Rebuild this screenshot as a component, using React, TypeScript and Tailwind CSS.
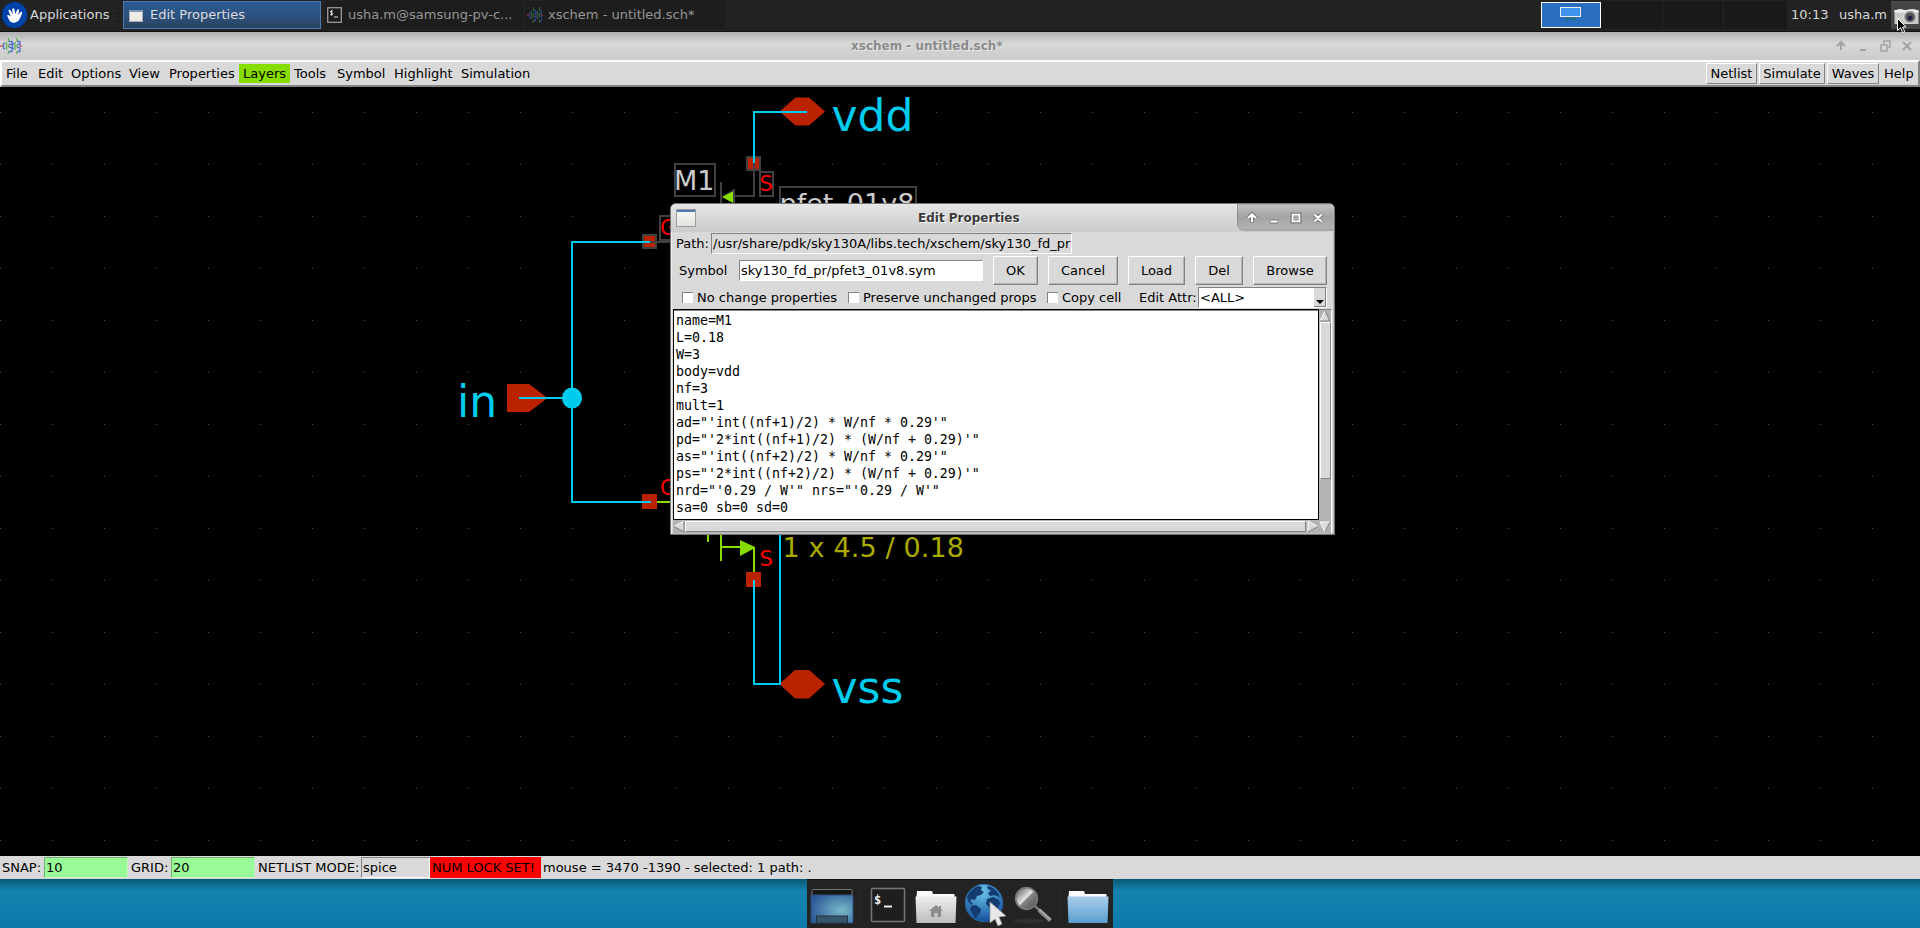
import React from "react";

const inset = "border border-t-[#828282] border-l-[#828282] border-r-white border-b-white";
const outset = "border border-t-white border-l-white border-r-[#828282] border-b-[#828282]";
const snapField = "flex h-[21px] w-[84px] items-center border border-[#6faf6f] border-r-[#c8f0c8] border-b-[#c8f0c8] bg-[#98fb98] pl-[1px]";

/* Single line of interface text; the class gives its colour and weight. */
function T({ children, cls = "text-black" }: { children: string; cls?: string }) {
  return <span className={"block h-5 shrink-0 text-[13px] leading-5 whitespace-nowrap " + cls}>{children}</span>;
}

const menus: [string, string][] = [
  ["File", "w-8"], ["Edit", "w-[33px]"], ["Options", "w-[58px]"], ["View", "w-10"], ["Properties", "w-[74px]"],
  ["Layers", "w-[51px] bg-[#88dd00]"], ["Tools", "w-[43px]"], ["Symbol", "w-[57px]"], ["Highlight", "w-[67px]"], ["Simulation", "w-[78px]"],
];

const props = [
  "name=M1", "L=0.18", "W=3", "body=vdd", "nf=3", "mult=1",
  "ad=\"'int((nf+1)/2) * W/nf * 0.29'\"",
  "pd=\"'2*int((nf+1)/2) * (W/nf + 0.29)'\"",
  "as=\"'int((nf+2)/2) * W/nf * 0.29'\"",
  "ps=\"'2*int((nf+2)/2) * (W/nf + 0.29)'\"",
  "nrd=\"'0.29 / W'\" nrs=\"'0.29 / W'\"",
  "sa=0 sb=0 sd=0",
];

function XschemIcon({ dim, width = 22 }: { dim?: boolean; width?: number }) {
  return (
    <svg width={width} height="16" viewBox="0 0 22 16" preserveAspectRatio="none" fill="none" strokeWidth="1.3" className="shrink-0" opacity={dim ? 0.6 : 0.85}>
      <path d="M0 8h3M19.500 8h2.500" stroke="#d84040" />
      <path d="M5 5.500h-1.500v5H5M12 3.500H8.500M12 3v3.500H9M12 9.500v4H8.500M12 9.500H9M14 5.500h-1.500v5H14M20 3.500h-3M20 3v3.500h-3M20 9.500v4h-3M20 9.500h-3" stroke="#3c60d0" />
      <path d="M8.500 0v3.500M8.500 16v-3M6.500 4v8M8.500 6.500v3M17 0v3.500M17 16v-3M15 4v8M17 6.500v3" stroke="#4aa83c" />
    </svg>
  );
}

function Taskbar() {
  return (
    <header className="flex h-8 shrink-0 items-center border-b border-[#111] bg-[#222] pb-px">
      <svg width="28" height="30" viewBox="0 0 28 30" className="ml-0.5 shrink-0">
        <ellipse cx="12.500" cy="15" rx="12.700" ry="13" fill="#0043a8" />
        <path d="M5 15.500c1.300-1.600 3 .3 3.800 1L6.500 11c-.3-1.800 1.700-1.700 2.300-.3l1.900 3.500-.5-4.700c.3-1.600 2-1.400 2.300 0l.8 4.500 1.800-4c.8-1.400 2.400-.5 2 1l-1 4.200 2.300-3c1.200-1 2.300.2 1.600 1.500-1.700 3.200-2 8.300-7.900 9-3.600.3-4.600-1.700-5.300-3.400z" fill="#fff" />
      </svg>
      <div className="flex w-[93px] shrink-0 items-center justify-between pr-[3px]">
        <T cls="text-[#d8d8d8]">Applications</T>
        <svg width="3" height="14"><path d="M0 1h3M0 5h3M0 9h3M0 13h3" stroke="#151515" /></svg>
      </div>
      <div className="flex h-7 w-[198px] shrink-0 items-center gap-[7px] border border-[#4a7ab0] bg-linear-to-b from-[#2b5a91] via-[#2d5280] to-[#2a4260] pl-[5px]">
        <svg width="14" height="14" className="mt-1"><rect x=".5" y=".5" width="13" height="11" fill="#ecebe5" stroke="#aaa" /><rect x="1" y="0" width="12" height="2" fill="#7898c0" /></svg>
        <T cls="text-[#dcdcdc]">Edit Properties</T>
      </div>
      <div className="ml-1 flex h-7 w-[200px] shrink-0 items-center gap-[6px] border-r border-[#262626] bg-[#1d1d1d] pl-[2px]">
        <svg width="15" height="16" viewBox="0 0 15 16"><rect x=".7" y=".7" width="13.600" height="14.600" fill="#1b1b1b" stroke="#9a9a9a" strokeWidth="1.300" /><path d="M5.800 4.200C5 3.500 3.400 3.800 3.400 4.800c0 1.300 2.400.7 2.400 2 0 1-1.600 1.300-2.500.6M4.600 3v5.800M7 10h4" stroke="#ddd" fill="none" /></svg>
        <T cls="text-[#969696]">usha.m@samsung-pv-c...</T>
      </div>
      <div className="flex h-7 w-[200px] shrink-0 items-center gap-[5px] bg-[#1d1d1d] pl-[2px]">
        <XschemIcon dim width={16} /><T cls="text-[#969696]">xschem - untitled.sch*</T>
      </div>
      <div className="ml-auto flex h-[30px] items-center">
        <div className="flex h-[26px] w-[60px] justify-center border border-white bg-[#2a6fbf] pt-[4px]">
          <svg width="22" height="18"><path d="M6 12l3-2 3 3 3-3M7 10v4M14 10v4" stroke="#27705f" fill="none" /><rect x=".5" y=".5" width="20" height="9" fill="#3f92ee" stroke="#eee" /></svg>
        </div>
        <div className="h-7 w-[62px] border-r border-[#262626] bg-[#191919]" />
        <div className="h-7 w-[61px] border-r border-[#262626] bg-[#191919]" />
        <div className="mr-[4px] h-7 w-[63px] bg-[#191919]" />
        <div className="w-12"><T cls="text-[#d8d8d8]">10:13</T></div>
        <div className="w-[52px]"><T cls="text-[#d8d8d8]">usha.m</T></div>
        <div className="flex h-7 w-[29px] items-center bg-[#454545]">
          <svg width="29" height="34" viewBox="0 0 29 34" className="relative z-10 shrink-0 overflow-visible">
            <path d="M4 12h2l1-1h4l2 1h3l2-1h6l2 2h1.500v13H3.500V12z" fill="#c9c9c5" /><path d="M3.500 12h24v2.500h-24z" fill="#eee" />
            <circle cx="19" cy="19" r="6.500" fill="#999" stroke="#e4e4e4" /><circle cx="19" cy="19" r="4.500" fill="#555" /><circle cx="19" cy="20" r="2.300" fill="#251a45" />
            <path d="M6.500 20.500v12l3-2.800 2.300 5 2-1-2.300-4.700h3.700z" fill="#000" stroke="#fff" strokeWidth="1" />
          </svg>
        </div>
      </div>
    </header>
  );
}

function Schematic() {
  const dots: React.ReactElement[] = [];
  for (let y = 112; y <= 840; y += 52) for (let x = 0; x < 1920; x += 52) dots.push(<rect key={x + "_" + y} x={x} y={y} width="1" height="1" fill="#505050" />);
  return (
    <svg viewBox="0 87 1920 769" width="1920" height="769" className="block shrink-0" fontFamily="DejaVu Sans, sans-serif">
      {dots}
      <g fill="#bb2200">
        <path d="M780 111.500L795.500 98h13.500l15.500 13.500L809 125h-13.500z" stroke="#bb2200" />
        <path d="M780 684L795 670.500h14l15.500 13.500-15.500 14h-14z" stroke="#bb2200" />
        <path d="M507 384h22l18.500 14-18.500 14h-22z" />
        <rect x="642" y="494" width="15" height="15" /><rect x="746" y="572" width="15" height="15" />
        <rect x="747" y="157" width="13" height="13" stroke="#404040" strokeWidth="2" /><rect x="643" y="235" width="13" height="13" stroke="#404040" strokeWidth="2" />
      </g>
      <g stroke="#404040" strokeWidth="2" fill="none">
        <path d="M754 163v33H734M721 182v22M708 203v1M650 242h30M734 189v14" />
        <rect x="675" y="164" width="40" height="32" /><rect x="760" y="172" width="13" height="24" />
        <rect x="780" y="187" width="136" height="33" /><rect x="660" y="216" width="16" height="24" />
      </g>
      <path d="M722 197l11-6v12z" fill="#88dd00" />
      <path d="M722 196l12-6" stroke="#404040" />
      <path d="M807 112H754v51M650 242H572v260h79M519 398h53M754 580v104h26V500" stroke="#00ccee" strokeWidth="2" fill="none" />
      <ellipse cx="572" cy="398" rx="10" ry="10.500" fill="#00ccee" />
      <path d="M657 502h20M708 520v22M721 520v41M721 547h20M754 547v25" stroke="#88dd00" strokeWidth="2" fill="none" />
      <path d="M740 540l15 7v1l-15 8z" fill="#88dd00" />
      <g fill="#00ccee" fontSize="44">
        <text x="831.500" y="131">vdd</text><text x="831.500" y="703">vss</text><text x="457" y="417">in</text>
      </g>
      <g fill="#ff0000" fontSize="21">
        <text x="759.500" y="191">S</text><text x="759.500" y="566">S</text><text x="660" y="235">G</text><text x="660" y="495">G</text>
      </g>
      <g fill="#cccccc" fontSize="27"><text x="674" y="190">M1</text><text x="779.500" y="213">pfet_01v8</text></g>
      <text x="782.500" y="557" fontSize="27" fill="#aaaa00" textLength="181.500">1 x 4.5 / 0.18</text>
    </svg>
  );
}

function Button({ cls, children }: { cls: string; children: string }) {
  return <div className={"flex h-[29px] shrink-0 items-center justify-center shadow-[inset_-1px_-1px_0_#b4b4b4] " + outset + " " + cls}><T>{children}</T></div>;
}

function Check({ cls, children }: { cls: string; children: string }) {
  return (
    <div className={"flex shrink-0 items-center gap-1 " + cls}>
      <span className="h-[11px] w-[11px] shrink-0 border-t border-l border-[#828282] bg-white" />
      <T>{children}</T>
    </div>
  );
}

function Dialog() {
  return (
    <section className="absolute top-[203px] left-[670px] flex h-[332px] w-[665px] flex-col overflow-hidden rounded-t-md border border-[#777] bg-[#d9d9d9] shadow-[inset_1px_1px_0_#eee,inset_-1px_-1px_0_#bbb]">
      <div className="flex h-7 shrink-0 items-start bg-linear-to-b from-[#e6e6e6] to-[#cbcbcb]">
        <svg width="20" height="19" className="mt-[5px] ml-[5px]">
          <defs><linearGradient id="wi" x2="0" y2="1"><stop stopColor="#fafaf8" /><stop offset="1" stopColor="#e2e2dc" /></linearGradient></defs>
          <rect x=".5" y=".5" width="19" height="17" fill="url(#wi)" stroke="#9b9b9b" /><rect x="1" y="1" width="18" height="2" fill="#4f7ab5" />
        </svg>
        <span className="mt-[4px] ml-[222px] text-[12px] leading-5 font-bold whitespace-nowrap text-[#3a3a3a] [text-shadow:1px_1px_0_#fff]">Edit Properties</span>
        <svg width="97" height="27" viewBox="0 0 97 27" className="ml-auto shrink-0">
          <defs><linearGradient id="g" x2="0" y2="1"><stop stopColor="#c4c4c4" /><stop offset=".5" stopColor="#a3a3a3" /><stop offset="1" stopColor="#b5b5b5" /></linearGradient></defs>
          <path d="M.5 0H98v26H5.500C2.500 25.500.5 22.500.5 19.500z" fill="url(#g)" stroke="#909090" />
          <g fill="none" stroke="#777" strokeWidth="4"><path d="M15 18.500v-7M11.200 14l3.800-3.800 3.800 3.800M33 17.500h8M77.500 10.500l7 7M84.500 10.500l-7 7" /></g>
          <g fill="none" stroke="#fff" strokeWidth="2"><path d="M15 18v-7M11.200 14l3.800-3.800 3.800 3.800M33.500 17.500h7M77.500 10.500l7 7M84.500 10.500l-7 7" /></g>
          <rect x="55.500" y="10.500" width="7" height="7" fill="none" stroke="#777" strokeWidth="4" /><rect x="55.500" y="10.500" width="7" height="7" fill="#a8a8a8" stroke="#fff" strokeWidth="1.600" />
        </svg>
      </div>
      <div className="ml-[5px] flex h-[23px] shrink-0 items-center">
        <div className="w-[35px]"><T>Path:</T></div>
        <div className={"flex h-[21px] w-[361px] items-center pl-[1px] " + inset}><T>/usr/share/pdk/sky130A/libs.tech/xschem/sky130_fd_pr</T></div>
      </div>
      <div className="ml-2 flex h-[31px] shrink-0 items-center">
        <div className="w-[60px] shrink-0"><T>Symbol</T></div>
        <div className={"mr-[10px] flex h-[21px] w-[244px] shrink-0 items-center bg-white pl-[1px] " + inset}><T>sky130_fd_pr/pfet3_01v8.sym</T></div>
        <Button cls="mr-[10px] w-[45px]">OK</Button><Button cls="mr-[10px] w-[70px]">Cancel</Button><Button cls="mr-[10px] w-[57px]">Load</Button><Button cls="mr-[10px] w-12">Del</Button><Button cls="w-[74px]">Browse</Button>
      </div>
      <div className="ml-[11px] flex h-[23px] shrink-0 items-center">
        <Check cls="w-[166px]">No change properties</Check><Check cls="w-[199px]">Preserve unchanged props</Check><Check cls="w-[92px]">Copy cell</Check>
        <div className="w-[59px] shrink-0"><T>Edit Attr:</T></div>
        <div className={"flex h-[21px] w-[129px] shrink-0 items-center bg-white pl-[1px] " + inset}>
          <T>{"<ALL>"}</T>
          <div className="ml-auto flex h-[19px] w-[12px] items-end justify-center border-r border-b border-[#828282] bg-[#d9d9d9] pb-[2px]"><svg width="8" height="5"><path d="M0 1h8L4 5z" /></svg></div>
        </div>
      </div>
      <div className="ml-[2px] flex h-[224px] w-[661px] shrink-0">
        <div className="flex w-[646px] shrink-0 flex-col">
          <div className="h-[211px] border border-black bg-white pt-[2px] pl-[2px] shadow-[inset_0_1px_0_#828282]">
            {props.map((p) => <pre key={p} className="h-[17px] font-['DejaVu_Sans_Mono',monospace] text-[13.29px] leading-[17px] text-black">{p}</pre>)}
          </div>
          <div className="flex h-[13px] items-center bg-[#b3b3b3]">
            <svg width="12" height="13"><path d="M1 6.500L11 1v11z" fill="#d9d9d9" /><path d="M1 6.500L11 1" stroke="#fff" /><path d="M1 6.500L11 12V1" stroke="#828282" fill="none" /></svg>
            <div className={"h-[11px] flex-1 bg-[#d9d9d9] " + outset} />
            <svg width="13" height="13"><path d="M12 6.500L2 1v11z" fill="#d9d9d9" /><path d="M2 12V1l10 5.500" stroke="#fff" fill="none" /><path d="M12 6.500L2 12" stroke="#828282" /></svg>
          </div>
        </div>
        <div className="flex w-[13px] flex-col items-center border-t border-r border-t-[#828282] border-r-white bg-[#b3b3b3]">
          <svg width="12" height="12"><path d="M6 1L1 11h10z" fill="#d9d9d9" /><path d="M6 1L1 11" stroke="#fff" /><path d="M6 1l5 10H1" stroke="#828282" fill="none" /></svg>
          <div className={"h-[157px] w-[11px] bg-[#d9d9d9] " + outset} />
          <svg width="12" height="12" className="mt-auto"><path d="M6 11L1 1h10z" fill="#d9d9d9" /><path d="M6 11L1 1h10" stroke="#fff" fill="none" /><path d="M6 11l5-10" stroke="#828282" /></svg>
        </div>
      </div>
    </section>
  );
}

function Dock() {
  return (
    <div className="flex h-[49px] w-[306px] items-center border-t border-[#111] bg-[#232323]">
      <svg width="306" height="48" viewBox="0 0 306 48">
        <defs>
          <radialGradient id="d1" cx=".72" cy=".55" r=".75"><stop stopColor="#78b8c8" /><stop offset="1" stopColor="#2c5a98" /></radialGradient>
          <linearGradient id="d2" x2="0" y2="1"><stop stopColor="#eee" /><stop offset="1" stopColor="#bdbdbd" /></linearGradient>
          <linearGradient id="d3" x2="0" y2="1"><stop stopColor="#a8cdea" /><stop offset="1" stopColor="#5c9fd0" /></linearGradient>
          <radialGradient id="d4" cx=".45" cy=".2" r=".8"><stop stopColor="#6ac4ea" /><stop offset="1" stopColor="#134f9c" /></radialGradient>
          <linearGradient id="d5" x2="1" y2="1"><stop stopColor="#555" /><stop offset=".48" stopColor="#e4e4e4" /><stop offset=".52" stopColor="#888" /><stop offset="1" stopColor="#444" /></linearGradient>
        </defs>
        <rect x="5" y="9.500" width="40" height="10" rx="1" fill="#161616" stroke="#777" />
        <rect x="4" y="15" width="42" height="28" rx="1" fill="url(#d1)" stroke="#2d517d" /><rect x="9.500" y="36" width="31" height="7" fill="#36566b" stroke="#26333f" />
        <path d="M52.500 8v32M252.500 8v32" stroke="#2c2c2c" />
        <rect x="64.500" y="8.500" width="33" height="33" rx="1" fill="#1e1e1e" stroke="#777" strokeWidth="1.500" />
        <text x="67" y="24" fill="#eee" fontSize="12" fontWeight="700" fontFamily="DejaVu Sans Mono, monospace">$</text><path d="M77 26.500h8" stroke="#eee" strokeWidth="2" />
        <path d="M110 11h15l1 3h21.500v4h-38z" fill="#fafafa" /><path d="M108.500 16.500h41l-1 26.500h-39z" fill="url(#d2)" />
        <path d="M122 31l7-6 3 2.500V26h2v3.500l2 1.500h-2v6h-3.500v-4h-3v4H124v-6z" fill="#8c8c8c" />
        <circle cx="177" cy="23" r="18.700" fill="url(#d4)" stroke="#2c6fae" strokeWidth=".8" />
        <path d="M160 17c2-5 6-9 11-11l4 1-1 3 3 2-3 3-4 1-2 4-3-1-2 2 3 3-2 1-3-4zM164 26l5-1 5 4-1 4-5 6-2-5-3-4zM181 6c6 1 10 6 12 11l-3-1-3-1-4 1-2-3 3-2-4-3zM180 19l6-2 6 3 1 4-4 7-4 3-2-6-4-4z" fill="#153c70" />
        <path d="M183 22v21l5-4 3 7 4-2-3-7 7-1z" fill="#e8e8e8" stroke="#999" strokeWidth=".7" />
        <ellipse cx="222" cy="41" rx="15" ry="2.500" fill="#2f2f2f" />
        <path d="M228 26l5 5" stroke="#777" strokeWidth="2.500" /><path d="M232 30l11.500 10.500" stroke="#8a8a8a" strokeWidth="4" /><path d="M232 29l11.500 10.500" stroke="#bbb" strokeWidth="1" /><circle cx="219.500" cy="18.500" r="10.800" fill="url(#d5)" stroke="#777" strokeWidth="1.800" />
        <path d="M262 11h15l1 3h21.500v4h-38z" fill="#fafafa" /><path d="M260.500 16.500h41l-1 26.500h-39z" fill="url(#d3)" />
      </svg>
    </div>
  );
}

export default function App() {
  return (
    <div className="relative flex h-[928px] w-[1920px] flex-col overflow-hidden bg-black font-['DejaVu_Sans',sans-serif]">
      <Taskbar />
      <div className="flex h-7 shrink-0 items-center bg-linear-to-b from-[#b0b0b0] via-[#d8d8d8] via-40% to-[#cbcbcb]">
        <div className="w-[851px]"><XschemIcon /></div>
        <span className="text-[12px] leading-5 font-bold whitespace-nowrap text-[#8b8b8b] [text-shadow:1px_1px_0_#e6e6e6]">xschem - untitled.sch*</span>
        <svg width="80" height="16" viewBox="0 0 80 16" className="mr-[7px] ml-auto" fill="none" stroke="#a3a3a3" strokeWidth="2"><path d="M8 12V4M4 8l4-4 4 4M27 12h6M70 4l8 8M78 4l-8 8" /><path d="M48 7h6v6h-6zM51 6V3h6v6h-2" strokeWidth="1.500" /></svg>
      </div>
      <nav className="flex h-[27px] shrink-0 items-center border-2 border-t-white border-r-[#828282] border-b-[#828282] border-l-white bg-[#d9d9d9]">
        {menus.map(([m, cls]) => <div key={m} className={"flex h-[19px] shrink-0 items-center pl-1 " + cls}><T>{m}</T></div>)}
        <div className="mr-[4px] ml-auto flex h-[21px] items-center gap-[2px]">
          {[["Netlist", "w-[51px]"], ["Simulate", "w-[66px]"], ["Waves", "w-[52px]"]].map(([m, cls]) => <div key={m} className={"flex h-[21px] items-center justify-center " + outset + " " + cls}><T>{m}</T></div>)}
          <div className="w-[33px] pl-[3px]"><T>Help</T></div>
        </div>
      </nav>
      <Schematic />
      <div className="flex h-[23px] shrink-0 items-center bg-[#d9d9d9] pl-[2px]">
        <div className="w-[42px]"><T>SNAP:</T></div>
        <div className={snapField}><T>10</T></div>
        <div className="w-[43px] pl-[3px]"><T>GRID:</T></div>
        <div className={snapField}><T>20</T></div>
        <div className="w-[106px] pl-[3px]"><T>NETLIST MODE:</T></div>
        <div className={"flex h-[21px] w-[69px] items-center pl-[1px] " + inset}><T>spice</T></div>
        <div className="flex h-[21px] w-[111px] items-center bg-[red] pl-[2px]"><T>NUM LOCK SET!</T></div>
        <div className="pl-[2px]"><T>mouse = 3470 -1390 - selected: 1 path: .</T></div>
      </div>
      <div className="flex h-[49px] shrink-0 justify-center bg-linear-to-b from-[#0a5877] via-[#1484ae] via-25% to-[#0b7aac]">
        <Dock />
      </div>
      <Dialog />
    </div>
  );
}
